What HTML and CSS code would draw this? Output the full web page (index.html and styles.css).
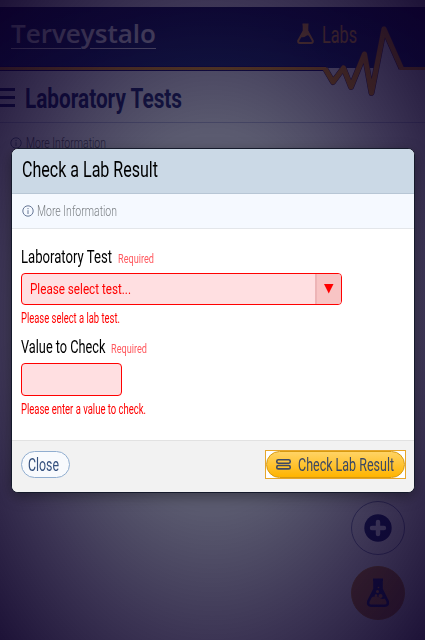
FILE: index.html
```
<!DOCTYPE html>
<html lang="en">
<head>
<meta charset="utf-8">
<title>Laboratory Tests</title>
<link rel="stylesheet" href="styles.css">
</head>
<body>
<div class="page">
  <header class="banner">
    <svg class="txt brand" width="146" height="28"><text y="20" textLength="145" lengthAdjust="spacingAndGlyphs">Terveystalo</text><path d="M0 25.5H70M79 25.5H145" stroke="#fff"/></svg>
    <div class="section">
      <svg class="flask-sm" width="17" height="22" viewBox="0 0 17 22"><path d="M5.500 1.500H11.500M6.700 2V8L1.300 17.500Q0.800 20 3 20H14Q16.200 20 15.700 17.500L10.300 8V2" fill="none" stroke="currentColor" stroke-width="2"/><path d="M6 2H11V8L14 14Q11 11 9 13T3 14L6 8Z" fill="currentColor"/></svg>
      <svg class="txt labs" width="36" height="24"><text y="19" textLength="35" lengthAdjust="spacingAndGlyphs">Labs</text></svg>
    </div>
    <svg class="pulse" width="425" height="90" viewBox="0 0 425 90"><path d="M326 61L333 76L343 61L351 80L364 47L372 86L384 22L401 61H425V64H326Z" fill="#fff" stroke="none"/><path class="edge" d="M-3 61.500H326"/><path class="spike-edge" d="M325 61.500L333 75L343.500 61L351 80L364.500 47L371.500 86L384 22L401.500 61.500"/><path class="line" d="M-3 61.500H326M400 61.500H428"/><path class="spike" d="M325 61.500L333 75L343.500 61L351 80L364.500 47L371.500 86L384 22L401.500 61.500"/></svg>
  </header>
  <div class="title-row">
    <svg class="burger" width="15" height="20"><path d="M0 1.500H15M0 9.500H15M0 17.500H15" stroke="currentColor" stroke-width="3"/></svg>
    <svg class="txt page-title" width="158" height="34"><text y="25" textLength="157" lengthAdjust="spacingAndGlyphs">Laboratory Tests</text></svg>
  </div>
  <div class="page-info">
    <svg class="info" width="12" height="12" viewBox="0 0 12 12"><circle cx="6" cy="6" r="5.200"/><path d="M6 5.200V9M6 3V4.200"/></svg>
    <svg class="txt more" width="81" height="18"><text y="14" textLength="80" lengthAdjust="spacingAndGlyphs">More Information</text></svg>
  </div>
  <div class="actions">
    <div class="round"><svg width="28" height="28" viewBox="0 0 28 28"><circle cx="14" cy="14" r="13.700" fill="#1a2468"/><path d="M14 8V20M8 14H20" stroke="#e4e5f2" stroke-width="4.400" stroke-linecap="round"/></svg></div>
    <div class="round amber"><svg width="24" height="30" viewBox="0 0 24 30"><path d="M7 1.700H17M8.500 3V11L2.300 23.500Q1.500 27.700 5 27.700H19Q22.500 27.700 21.700 23.500L15.500 11V3" fill="none" stroke="#1a2468" stroke-width="2.600"/><path d="M8 2H16V11L20 20Q16 22 13 19.500T4 20L8 11Z" fill="#1a2468"/><g fill="#d8902a"><circle cx="11.500" cy="13.500" r="1.500"/><circle cx="14.500" cy="18" r="2.100"/><circle cx="10" cy="17.500" r="1.300"/><circle cx="12.500" cy="9.500" r=".8"/></g></svg></div>
  </div>
</div>
<div class="backdrop">
  <section class="dialog" role="dialog">
    <header class="dialog-head"><svg class="txt heading" width="137" height="28"><text y="20" textLength="136" lengthAdjust="spacingAndGlyphs">Check a Lab Result</text></svg></header>
    <div class="dialog-info">
      <svg class="info" width="12" height="12" viewBox="0 0 12 12"><circle cx="6" cy="6" r="5.200"/><path d="M6 5.200V9M6 3V4.200"/></svg>
      <svg class="txt more" width="81" height="18"><text y="14" textLength="80" lengthAdjust="spacingAndGlyphs">More Information</text></svg>
    </div>
    <div class="dialog-body">
      <div class="label-row">
        <svg class="txt label" width="92" height="24"><text y="18" textLength="91" lengthAdjust="spacingAndGlyphs">Laboratory Test</text></svg>
        <svg class="txt required" width="37" height="24"><text y="18" textLength="36" lengthAdjust="spacingAndGlyphs">Required</text></svg>
      </div>
      <div class="select">
        <svg class="txt choice" width="102" height="20"><text y="15" textLength="101" lengthAdjust="spacingAndGlyphs">Please select test...</text></svg>
        <div class="arrow"><svg width="10" height="10"><path d="M0 0H9.500L4.750 9.500Z" fill="red"/></svg></div>
      </div>
      <div class="error"><svg class="txt" width="100" height="20"><text y="14" textLength="99" lengthAdjust="spacingAndGlyphs">Please select a lab test.</text></svg></div>
      <div class="label-row second">
        <svg class="txt label" width="85" height="24"><text y="18" textLength="84.500" lengthAdjust="spacingAndGlyphs">Value to Check</text></svg>
        <svg class="txt required" width="37" height="24"><text y="18" textLength="36" lengthAdjust="spacingAndGlyphs">Required</text></svg>
      </div>
      <div class="input"></div>
      <div class="error"><svg class="txt" width="126" height="20"><text y="14" textLength="125" lengthAdjust="spacingAndGlyphs">Please enter a value to check.</text></svg></div>
    </div>
    <footer class="dialog-foot">
      <div class="btn"><svg class="txt" width="31" height="25"><text y="19" textLength="31" lengthAdjust="spacingAndGlyphs">Close</text></svg></div>
      <div class="focus"><div class="btn primary">
        <svg width="15" height="11" viewBox="0 0 15 11"><g fill="none" stroke="currentColor" stroke-width="1.600"><rect x=".8" y=".8" width="13.400" height="3.400" rx="1.500"/><rect x=".8" y="6.500" width="13.400" height="3.400" rx="1.500"/></g></svg>
        <svg class="txt" width="97" height="25"><text y="19" textLength="96" lengthAdjust="spacingAndGlyphs">Check Lab Result</text></svg>
      </div></div>
    </footer>
  </section>
</div>
</body>
</html>
```
FILE: styles.css
```
* { box-sizing: border-box; }
body { margin: 0; height: 640px; overflow: hidden; font-family: Roboto, "Liberation Sans", sans-serif; }
svg { display: block; flex: none; }
.txt { overflow: visible; fill: currentColor; }
.page { height: 640px; padding-top: 7px; background: #fff; }

.banner { position: relative; height: 61px; display: flex; justify-content: space-between; padding: 16px 67px 0 11px; background: linear-gradient(#0c1250, #10246a); }
.brand { color: #fff; font: 600 25px "Open Sans", sans-serif; }
.section { display: flex; gap: 8px; color: #f5a52a; }
.labs { font-size: 24px; font-weight: 400; margin-top: 1px; }
.pulse { position: absolute; left: 0; top: 0; fill: none; stroke-linejoin: round; }
.edge { stroke: #0c0060; stroke-width: 5; }
.spike-edge { stroke: #402a50; stroke-width: 6; }
.line { stroke: #ffa000; stroke-width: 3; }
.spike { stroke: #f59a00; stroke-width: 5; }

.title-row { height: 55px; display: flex; gap: 10px; padding-top: 15px; border-bottom: 1px solid #bcc0dc; color: #141c60; }
.burger { margin-top: 5px; }
.page-title { font-size: 28px; font-weight: 700; }
.page-info { display: flex; gap: 4px; padding: 11px 0 0 10px; color: #555; }
.page-info .info { margin-top: 3px; }
.info { fill: none; stroke: #667796; stroke-width: 1; }
.more { font-size: 15px; font-weight: 300; }
.actions { position: absolute; right: 20px; bottom: 20px; display: grid; gap: 11px; }
.round { width: 54px; height: 54px; border: 1px solid #7c84b0; border-radius: 50%; display: grid; place-items: center; }
.amber { background: #c8802a; border-color: #d09020; }

.backdrop { position: fixed; inset: 0; padding: 148px 10px 0 11px; background: radial-gradient(ellipse farthest-corner at center, rgba(22,22,52,.6) 0%, rgba(20,20,50,.7) 42%, rgba(14,5,44,.81) 71%, rgba(12,0,40,.93) 100%); }
.dialog { height: 345px; display: flex; flex-direction: column; border: 1px solid #151a2b; border-radius: 7px; overflow: hidden; background: #fff; box-shadow: 0 4px 14px rgba(0,0,0,.35); }
.dialog-head { height: 45px; padding: 8px 0 0 10px; background: #cbd9e6; border-bottom: 1px solid #b7c6d5; }
.heading { font-size: 22px; font-weight: 400; }
.dialog-info { height: 35px; display: flex; gap: 4px; padding: 8px 0 0 9.500px; background: #f5f9ff; border-bottom: 1px solid #e3e6ea; color: #7c8085; }
.dialog-info .info { margin-top: 3px; }
.dialog-info .more { margin-left: -.5px; }
.dialog-body { flex: 1; padding: 16px 9px 0; }
.label-row { height: 28px; display: flex; gap: 5px; color: #000; }
.label { font-size: 18.500px; font-weight: 400; }
.required { font-size: 12.500px; font-weight: 400; color: #ff5a60; }
.select { width: 321px; height: 32px; display: flex; justify-content: space-between; border: 1px solid red; border-radius: 4px; overflow: hidden; background: #ffdfe1; color: red; }
.choice { margin: 5px 0 0 8px; font-size: 14.500px; font-weight: 400; }
.arrow { width: 26px; background: #f8c4c4; border-left: 2px solid #edb4b6; display: grid; place-items: center; }
.error { height: 26px; padding-top: 4px; color: red; font-size: 14.500px; font-weight: 400; }
.second { margin-top: 4px; }
.input { width: 101px; height: 33px; border: 1px solid red; border-radius: 4px; background: #ffdfe1; }
.dialog-foot { height: 52px; display: flex; justify-content: space-between; align-items: flex-start; padding: 9px 8px 0 9px; background: #f2f2f2; border-top: 1px solid #e2e2e2; }
.btn { height: 27px; padding: 0 10px 0 6px; border: 1px solid #91aed0; border-radius: 14px; background: #f8fafd; color: #34507e; font-size: 18.500px; font-weight: 400; }
.dialog-foot > .btn { margin-top: 1px; width: 49px; }
.focus { border: 1px solid #e6a62c; background: #fff; }
.primary { display: flex; align-items: center; gap: 7px; width: 139px; padding: 0 9px; border-color: #d79a10; background: linear-gradient(#ffd365, #ffb400); color: #3c4863; }
```
